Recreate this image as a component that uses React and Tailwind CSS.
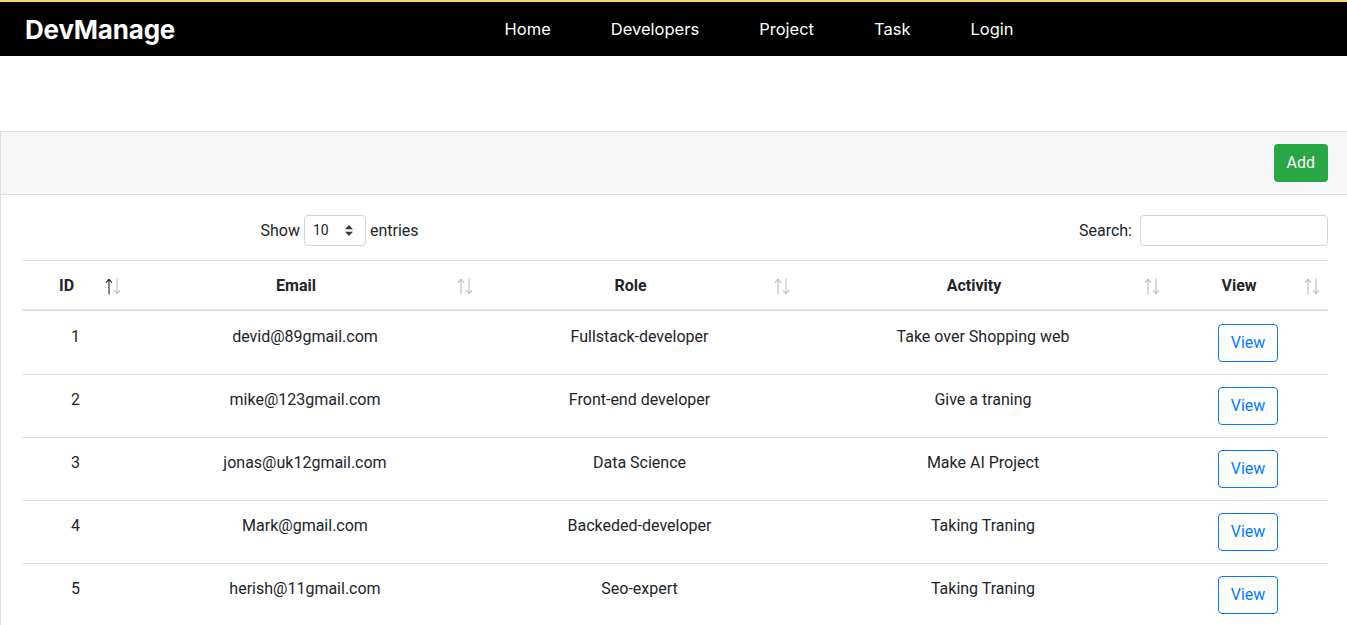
import React from 'react';

const developers = [
  { id: 1, email: 'devid@89gmail.com', role: 'Fullstack-developer', activity: 'Take over Shopping web' },
  { id: 2, email: 'mike@123gmail.com', role: 'Front-end developer', activity: 'Give a traning' },
  { id: 3, email: 'jonas@uk12gmail.com', role: 'Data Science', activity: 'Make AI Project' },
  { id: 4, email: 'Mark@gmail.com', role: 'Backeded-developer', activity: 'Taking Traning' },
  { id: 5, email: 'herish@11gmail.com', role: 'Seo-expert', activity: 'Taking Traning' },
];

const columns = [
  { key: 'id', title: 'ID', width: 'w-[107px]', active: true },
  { key: 'email', title: 'Email', width: 'w-[352px]' },
  { key: 'role', title: 'Role', width: 'w-[317px]' },
  { key: 'activity', title: 'Activity', width: 'w-[370px]' },
  { key: 'view', title: 'View', width: 'w-[160px]' },
];

// up / down sort arrows, up is dark when column is the sorted one
const SortArrows = ({ active }) => (
  <svg
    className="absolute right-[8px] top-[17px]"
    width="16"
    height="17"
    viewBox="0 0 16 17"
    fill="none"
    strokeWidth="1.1"
    strokeLinecap="round"
    strokeLinejoin="round"
  >
    <g stroke="#212529" opacity={active ? 1 : 0.3}>
      <path d="M4 1.5 V16" />
      <path d="M1.3 4.3 L4 1.3 L6.7 4.3" />
    </g>
    <g stroke="#212529" opacity="0.3">
      <path d="M12 1 V15.5" />
      <path d="M9.3 12.7 L12 15.7 L14.7 12.7" />
    </g>
  </svg>
);

const Navbar = () => (
  <nav className="h-[56px] bg-black border-t-2 border-[#f7d774] flex items-center pl-[25px]">
    <a href="#" className="text-white text-[26px] font-bold tracking-[-0.2px] font-['Inter',sans-serif]">
      DevManage
    </a>
    <ul className="flex-1 flex justify-center gap-[60px] text-white text-[16.5px] font-['Inter',sans-serif] pr-1">
      <li>Home</li>
      <li>Developers</li>
      <li>Project</li>
      <li>Task</li>
      <li>Login</li>
    </ul>
  </nav>
);

const App = () => {
  return (
    <div className="min-h-screen bg-white font-['Roboto',sans-serif] text-[#212529] text-[16px]">
      <Navbar />

      <div className="mt-[75px] border-l border-y border-[#dfdfdf]">
        {/* card header */}
        <div className="bg-[#f7f7f7] border-b border-[#dfdfdf] flex justify-end py-3 pr-[19px]">
          <button className="bg-[#28a745] text-white rounded px-[13px] h-[38px] leading-6">Add</button>
        </div>

        {/* card body */}
        <div className="pt-5 pl-[21px] pr-[19px]">
          <div className="grid grid-cols-2 items-center h-[31px] mb-[14px]">
            <div className="flex justify-center items-center gap-1 pr-[18px]">
              <span>Show</span>
              <div className="w-[62px] h-[31px] border border-[#ced4da] rounded flex items-center justify-between pl-2 pr-3 text-[14px]">
                <span>10</span>
                <svg width="8" height="11" viewBox="0 0 8 11" fill="#343a40">
                  <path d="M4 0 L8 4.2 H0 Z" />
                  <path d="M4 11 L0 6.8 H8 Z" />
                </svg>
              </div>
              <span>entries</span>
            </div>
            <div className="flex justify-end items-center gap-2">
              <span>Search:</span>
              <div className="w-[188px] h-[31px] border border-[#ced4da] rounded" />
            </div>
          </div>

          <table className="w-full table-fixed border-separate border-spacing-0">
            <thead>
              <tr>
                {columns.map((col) => (
                  <th
                    key={col.key}
                    className={`${col.width} relative font-bold text-center pl-3 pr-[30px] pt-[13px] pb-[11px] leading-6 border-t border-b-2 border-[#dee2e6]`}
                  >
                    {col.title}
                    <SortArrows active={col.active} />
                  </th>
                ))}
              </tr>
            </thead>
            <tbody>
              {developers.map((dev, i) => {
                const border = `border-t ${i === 0 ? 'border-transparent' : 'border-[#dee2e6]'}`;
                const cell = `px-3 pt-[13px] pb-[11px] text-center align-top leading-6 ${border}`;
                return (
                  <tr key={dev.id}>
                    <td className={cell}>{dev.id}</td>
                    <td className={cell}>{dev.email}</td>
                    <td className={cell}>{dev.role}</td>
                    <td className={cell}>{dev.activity}</td>
                    <td className={`p-3 text-center align-top ${border}`}>
                      <button className="border border-[#007bff] text-[#007bff] rounded px-3 h-[38px]">View</button>
                    </td>
                  </tr>
                );
              })}
            </tbody>
          </table>
        </div>
      </div>
    </div>
  );
};

export default App;
